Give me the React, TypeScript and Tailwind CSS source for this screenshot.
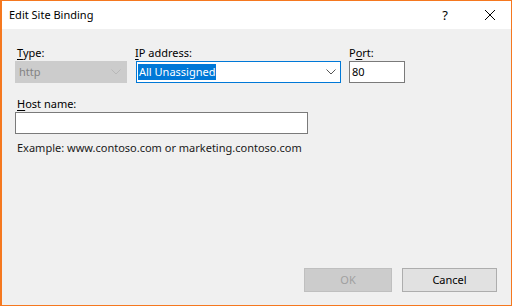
import React from "react";

const font = { fontFamily: '"Noto Sans", "Segoe UI", sans-serif' };

function Chevron({ color }: { color: string }) {
  return (
    <svg width="10" height="6" viewBox="0 0 10 6" className="shrink-0">
      <path d="M0.5 0.5 L5 5 L9.5 0.5" fill="none" stroke={color} strokeWidth="1" />
    </svg>
  );
}

export default function App() {
  return (
    <div
      className="w-[512px] h-[306px] border-l-2 border-t border-r border-b border-[#f5781f] bg-[#f0f0f0] flex flex-col text-[11px] leading-[16px] text-black"
      style={font}
    >
      <div className="h-[28px] bg-white flex items-center shrink-0">
        <div className="pl-[7px] flex-1">Edit Site Binding</div>
        <div className="w-[16px] text-center mr-[31px] text-[13px]">?</div>
        <svg width="12" height="12" viewBox="0 0 12 12" className="mr-[15px]">
          <path d="M1 1 L11 11 M11 1 L1 11" stroke="#000" strokeWidth="1" />
        </svg>
      </div>
      <div className="flex-1 flex flex-col pl-[13px] pr-[14px] pt-[16px] pb-[13px]">
        <div className="flex">
          <div className="flex flex-col w-[112px]">
            <div className="pl-[2px] h-[16px]">
              <span className="underline underline-offset-2">T</span>ype:
            </div>
            <div className="h-[22px] bg-[#cccccc] flex items-center pl-[4px] pr-[6px] text-[#838383]">
              <span className="flex-1">http</span>
              <Chevron color="#b8b8b8" />
            </div>
          </div>
          <div className="flex flex-col w-[205px] ml-[9px]">
            <div className="-ml-[1px] h-[16px]">
              <span className="underline underline-offset-2">I</span>P address:
            </div>
            <div className="h-[22px] bg-white border border-[#0078d7] flex items-center pl-[1px] pr-[4px]">
              <span className="bg-[#0078d7] text-white h-[16px] px-[1px] leading-[16px]">All Unassigned</span>
              <span className="flex-1" />
              <Chevron color="#555" />
            </div>
          </div>
          <div className="flex flex-col w-[56px] ml-[8px]">
            <div className="h-[16px]">
              P<span className="underline underline-offset-2">o</span>rt:
            </div>
            <div className="h-[22px] bg-white border border-[#7a7a7a] flex items-center pl-[2px]">80</div>
          </div>
        </div>
        <div className="flex flex-col w-[293px] mt-[13px]">
          <div className="pl-[2px] h-[16px]">
            <span className="underline underline-offset-2">H</span>ost name:
          </div>
          <div className="h-[22px] bg-white border border-[#7a7a7a]" />
        </div>
        <div className="pl-[2px] mt-[6px] text-[#1a1a1a]">Example: www.contoso.com or marketing.contoso.com</div>
        <div className="flex-1" />
        <div className="flex justify-end">
          <div className="w-[88px] h-[24px] bg-[#cccccc] border border-[#bfbfbf] flex items-center justify-center text-[#a0a0a0]">OK</div>
          <div className="w-[95px] h-[24px] bg-[#e1e1e1] border border-[#adadad] flex items-center justify-center ml-[10px]">Cancel</div>
        </div>
      </div>
    </div>
  );
}
